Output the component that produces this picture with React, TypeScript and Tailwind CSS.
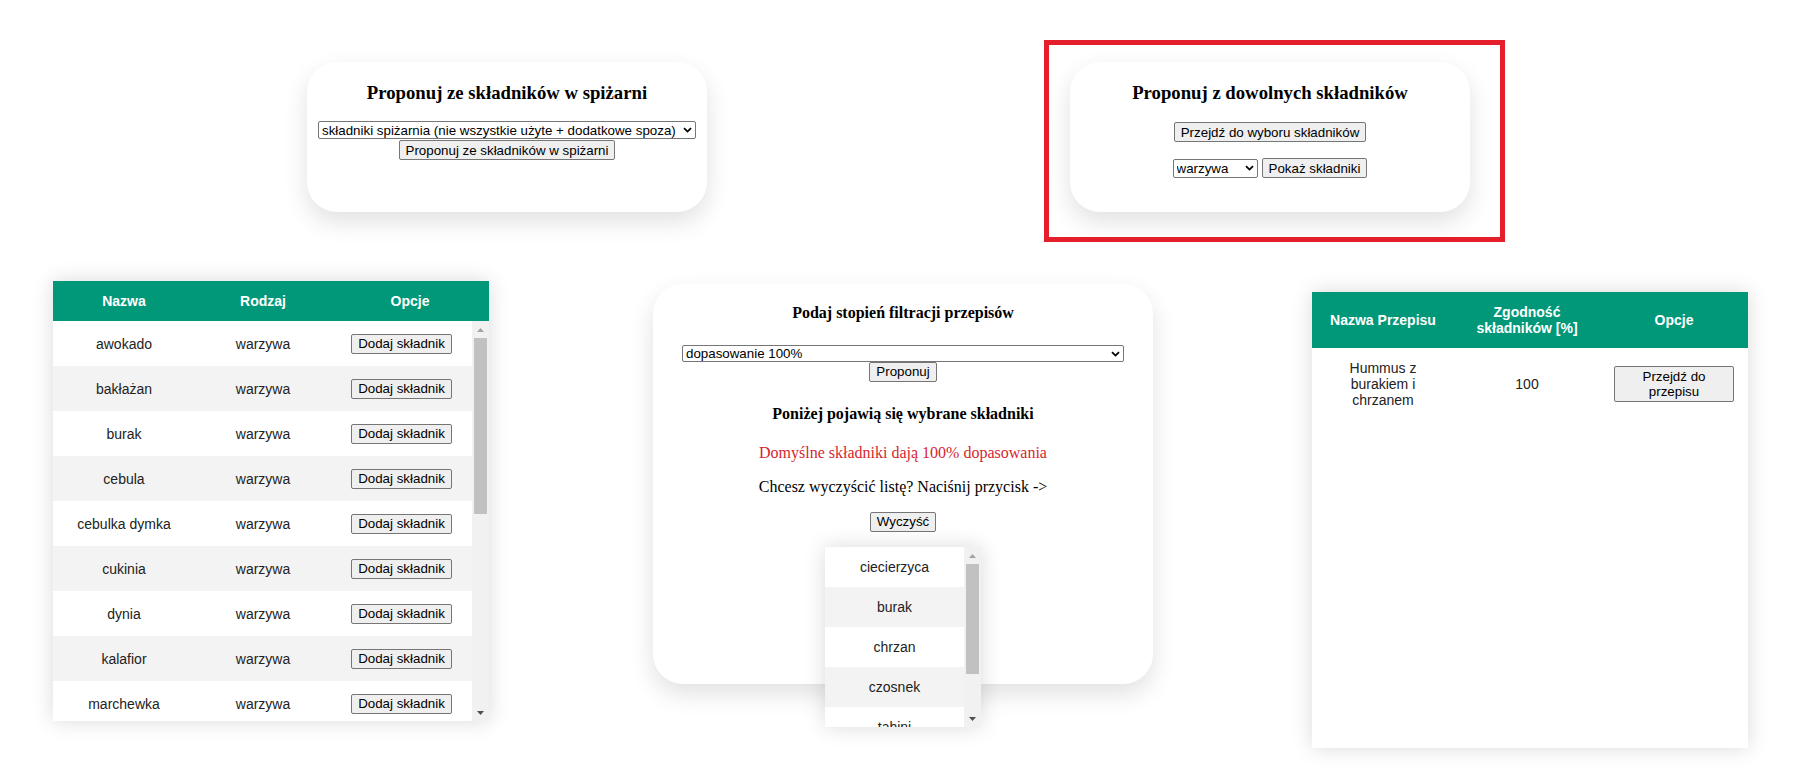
import type { ReactNode } from 'react';

const ingredients = ['awokado', 'bakłażan', 'burak', 'cebula', 'cebulka dymka', 'cukinia', 'dynia', 'kalafior', 'marchewka'];
const chosen = ['ciecierzyca', 'burak', 'chrzan', 'czosnek', 'tahini'];

function Btn({ children, className = '' }: { children: ReactNode; className?: string }) {
  return (
    <button
      type="button"
      className={`bg-[#efefef] border border-[#767676] rounded-[2px] px-[6px] text-[13.33px] text-black font-['Liberation_Sans',Arial,sans-serif] ${className}`}
    >
      {children}
    </button>
  );
}

function Sel({ value, className = '' }: { value: string; className?: string }) {
  return (
    <span className={`relative inline-flex ${className}`}>
      <select
        defaultValue={value}
        className="appearance-none w-full h-full bg-white border border-[#767676] rounded-[2px] pl-[3px] pr-[18px] text-[13.33px] leading-[15px] text-black font-['Liberation_Sans',Arial,sans-serif] outline-none"
      >
        <option value={value}>{value}</option>
      </select>
      <svg className="absolute right-[4px] top-1/2 -translate-y-1/2 pointer-events-none" width="9" height="6" viewBox="0 0 9 6">
        <path d="M1 1.2 L4.5 4.6 L8 1.2" stroke="#000" strokeWidth="1.8" fill="none" />
      </svg>
    </span>
  );
}

function Arrow({ up, dim }: { up?: boolean; dim?: boolean }) {
  return (
    <div className="h-[17px] flex items-center justify-center">
      <svg width="7" height="4" viewBox="0 0 7 4">
        <path d={up ? 'M0 4 L3.5 0 L7 4 Z' : 'M0 0 L3.5 4 L7 0 Z'} fill={dim ? '#a3a3a3' : '#505050'} />
      </svg>
    </div>
  );
}

function Scrollbar({ thumb }: { thumb: number }) {
  return (
    <div className="w-[17px] h-full flex flex-col bg-[#f1f1f1]">
      <Arrow up dim />
      <div className="mx-[2px] bg-[#c1c1c1]" style={{ height: thumb }} />
      <div className="flex-1" />
      <Arrow />
    </div>
  );
}

export default function App() {
  return (
    <div className="w-[1805px] h-[769px] bg-white overflow-hidden font-['Liberation_Serif','Times_New_Roman',serif] text-black">
      {/* top row */}
      <div className="flex items-start pl-[307px]">
        <div className="mt-[62px] w-[400px] h-[150px] bg-white rounded-[30px] shadow-[0_10px_25px_rgba(0,0,0,0.12)] flex flex-col items-center pt-[20px]">
          <h3 className="text-[18.72px] leading-[21px] font-bold">Proponuj ze składników w spiżarni</h3>
          <Sel value="składniki spiżarnia (nie wszystkie użyte + dodatkowe spoza)" className="mt-[18px] w-[378px] h-[18px]" />
          <Btn className="mt-[1px] h-[20px]">Proponuj ze składników w spiżarni</Btn>
        </div>

        <div className="ml-[337px] mt-[40px] border-[5px] border-[#e41f2b] pt-[17px] pl-[21px] pr-[30px] pb-[25px]">
          <div className="w-[400px] h-[150px] bg-white rounded-[30px] shadow-[0_10px_25px_rgba(0,0,0,0.12)] flex flex-col items-center pt-[20px]">
            <h3 className="text-[18.72px] leading-[21px] font-bold">Proponuj z dowolnych składników</h3>
            <Btn className="mt-[19px] h-[20px]">Przejdź do wyboru składników</Btn>
            <div className="mt-[16px] flex items-center gap-[4px]">
              <Sel value="warzywa" className="w-[85px] h-[19px]" />
              <Btn className="h-[20px]">Pokaż składniki</Btn>
            </div>
          </div>
        </div>
      </div>

      {/* bottom row */}
      <div className="flex items-start">
        {/* ingredient table */}
        <div className="ml-[53px] mt-[39px] w-[436px] bg-white shadow-[0_0_20px_rgba(0,0,0,0.15)] font-['Liberation_Sans',Arial,sans-serif] text-[14px] leading-[16px]">
          <div className="flex items-center h-[40px] bg-[#009879] text-white font-bold">
            <div className="w-[142px] text-center">Nazwa</div>
            <div className="w-[136px] text-center">Rodzaj</div>
            <div className="flex-1 text-center">Opcje</div>
          </div>
          <div className="flex h-[400px]">
            <div className="flex-1 overflow-hidden text-[#222]">
              {ingredients.map((name, i) => (
                <div key={name} className={`flex items-center h-[45px] ${i % 2 ? 'bg-[#f3f3f3]' : 'bg-white'}`}>
                  <div className="w-[142px] text-center">{name}</div>
                  <div className="w-[136px] text-center">warzywa</div>
                  <div className="flex-1 flex justify-center">
                    <Btn className="h-[20px]">Dodaj składnik</Btn>
                  </div>
                </div>
              ))}
            </div>
            <Scrollbar thumb={176} />
          </div>
        </div>

        {/* filter card */}
        <div className="ml-[164px] mt-[42px] w-[500px] h-[400px] bg-white rounded-[30px] shadow-[0_10px_25px_rgba(0,0,0,0.12)] flex flex-col items-center pt-[20px] text-[16px] leading-[18px]">
          <h4 className="font-bold">Podaj stopień filtracji przepisów</h4>
          <Sel value="dopasowanie 100%" className="mt-[23px] w-[442px] h-[18px]" />
          <Btn className="h-[20px]">Proponuj</Btn>
          <h4 className="mt-[23px] font-bold">Poniżej pojawią się wybrane składniki</h4>
          <p className="mt-[21px] text-[#d61f2e]">Domyślne składniki dają 100% dopasowania</p>
          <p className="mt-[16px]">Chcesz wyczyścić listę? Naciśnij przycisk -&gt;</p>
          <Btn className="mt-[16px] h-[20px]">Wyczyść</Btn>
          <div className="mt-[15px] w-[156px] h-[180px] shrink-0 flex bg-white shadow-[0_0_20px_rgba(0,0,0,0.15)] font-['Liberation_Sans',Arial,sans-serif] text-[14px] leading-[16px] text-[#222]">
            <div className="w-[139px] overflow-hidden">
              {chosen.map((name, i) => (
                <div key={name} className={`h-[40px] flex items-center justify-center ${i % 2 ? 'bg-[#f3f3f3]' : 'bg-white'}`}>
                  {name}
                </div>
              ))}
            </div>
            <Scrollbar thumb={110} />
          </div>
        </div>

        {/* recipes table */}
        <div className="ml-[159px] mt-[50px] w-[436px] bg-white shadow-[0_0_20px_rgba(0,0,0,0.15)] font-['Liberation_Sans',Arial,sans-serif] text-[14px] leading-[16px]">
          <div className="flex items-center h-[56px] bg-[#009879] text-white font-bold">
            <div className="w-[142px] px-[15px] text-center">Nazwa Przepisu</div>
            <div className="w-[146px] px-[15px] text-center">Zgodność składników [%]</div>
            <div className="flex-1 text-center">Opcje</div>
          </div>
          <div className="h-[400px] text-[#222]">
            <div className="flex items-center py-[12px]">
              <div className="w-[142px] px-[15px] text-center">Hummus z burakiem i chrzanem</div>
              <div className="w-[146px] text-center">100</div>
              <div className="flex-1 flex justify-center">
                <Btn className="w-[120px] py-[2px] leading-[15.33px]">Przejdź do przepisu</Btn>
              </div>
            </div>
          </div>
        </div>
      </div>
    </div>
  );
}
